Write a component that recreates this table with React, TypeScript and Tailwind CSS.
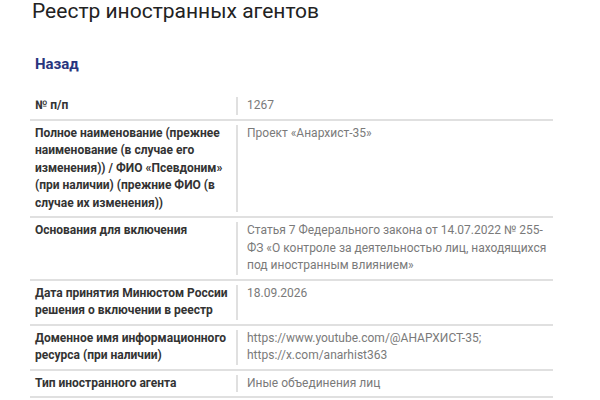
const rows: { label: string; value: string[] }[] = [
  { label: "№ п/п", value: ["1267"] },
  {
    label:
      "Полное наименование (прежнее наименование (в случае его изменения)) / ФИО «Псевдоним» (при наличии) (прежние ФИО (в случае их изменения))",
    value: ["Проект «Анархист-35»"],
  },
  {
    label: "Основания для включения",
    value: [
      "Статья 7 Федерального закона от 14.07.2022 № 255-ФЗ «О контроле за деятельностью лиц, находящихся под иностранным влиянием»",
    ],
  },
  {
    label: "Дата принятия Минюстом России решения о включении в реестр",
    value: ["18.09.2026"],
  },
  {
    label: "Доменное имя информационного ресурса (при наличии)",
    value: ["https://www.youtube.com/@АНАРХИСТ-35;", "https://x.com/anarhist363"],
  },
  { label: "Тип иностранного агента", value: ["Иные объединения лиц"] },
];

export default function App() {
  return (
    <div className="h-[400px] w-[600px] overflow-hidden bg-white font-['Roboto',sans-serif]">
      <div className="pl-[30px] pr-[47px]">
        <h1 className="-mt-[3px] pl-[2px] text-[21px] leading-[28px] text-[#222]">
          Реестр иностранных агентов
        </h1>
        <div className="mt-[29px] pl-[5px] text-[15px] font-bold leading-[20px] text-[#28357e]">
          Назад
        </div>
        <div className="mt-[19px]">
          {rows.map((r) => (
            <div
              key={r.label}
              className="flex border-b-2 border-[#e0e0e0] pb-[4px] pt-[4px] text-[12px] leading-[17.5px]"
            >
              <div className="w-[206px] shrink-0 pl-[5px] pr-[4px] font-bold text-[#333]">
                {r.label}
              </div>
              <div className="flex-1 border-l-2 border-[#e0e0e0] pl-[9px] text-[#7a7a7a]">
                {r.value.map((v) => (
                  <div key={v}>{v}</div>
                ))}
              </div>
            </div>
          ))}
        </div>
      </div>
    </div>
  );
}
